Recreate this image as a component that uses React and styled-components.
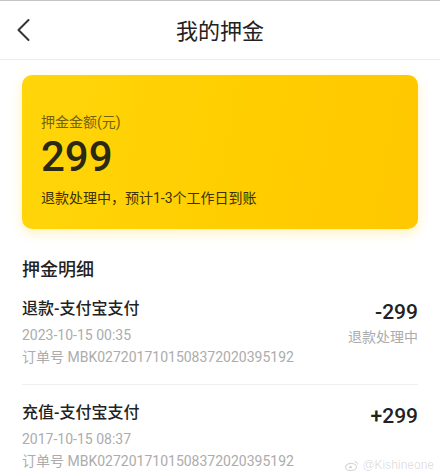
import React from "react";
import styled, { createGlobalStyle } from "styled-components";

const Global = createGlobalStyle`
  html, body { margin: 0; padding: 0; background: #fff; }
  body { font-family: Roboto, "Noto Sans CJK SC", sans-serif; color: #222; }
`;

const Page = styled.div`
  position: relative;
  width: 440px;
  height: 475px;
  overflow: hidden;
  background: #fff;
  border-top: 1px solid #c4c4c4;
  box-sizing: border-box;
`;

const Header = styled.header`
  position: relative;
  height: 59px;
  display: flex;
  align-items: center;
  justify-content: center;
  border-bottom: 1px solid #ececec;
  padding-top: 3px;
  box-sizing: border-box;
`;

const BackButton = styled.button`
  position: absolute;
  left: 12px;
  top: 12px;
  width: 24px;
  height: 34px;
  border: 0;
  padding: 0;
  background: transparent;
  display: flex;
  align-items: center;
  justify-content: center;
`;

const Title = styled.h1`
  margin: 0;
  font-size: 22px;
  font-weight: 400;
  line-height: 30px;
  color: #222;
`;

const Body = styled.main`
  padding: 15px 22px 0;
`;

const Card = styled.section`
  height: 154px;
  box-sizing: border-box;
  border-radius: 10px;
  padding: 37px 19px 0;
  background: linear-gradient(100deg, #ffd60a 0%, #ffcd00 60%, #ffc800 100%);
  box-shadow: 0 4px 12px rgba(255, 200, 0, 0.26);
`;

const CardLabel = styled.div`
  font-size: 14px;
  line-height: 20px;
  color: #74620a;
`;

const CardAmount = styled.div`
  margin-top: 3px;
  font-size: 42px;
  line-height: 44px;
  font-weight: 500;
  color: #2b2814;
`;

const CardNote = styled.div`
  margin-top: 9px;
  font-size: 14px;
  line-height: 20px;
  color: #3b3200;
`;

const SectionTitle = styled.h2`
  margin: 29px 0 0;
  font-size: 18px;
  line-height: 24px;
  font-weight: 500;
  color: #222;
`;

const Record = styled.div`
  display: grid;
  grid-template-columns: 1fr auto;
  padding: ${(p) => (p.$first ? "16px 0 17px" : "17px 0 17px")};
  border-bottom: ${(p) => (p.$last ? "none" : "1px solid #f0f0f0")};
`;

const Left = styled.div`
  display: flex;
  flex-direction: column;
`;

const Right = styled.div`
  display: flex;
  flex-direction: column;
  align-items: flex-end;
`;

const RecordTitle = styled.div`
  font-size: 16px;
  line-height: 22px;
  font-weight: 500;
  color: #222;
`;

const Meta = styled.div`
  margin-top: ${(p) => p.$mt || 0}px;
  font-size: 14px;
  line-height: 20px;
  color: #acacac;
`;

const Amount = styled.div`
  margin-top: 1px;
  font-size: 21px;
  line-height: 26px;
  font-weight: 500;
  color: #222;
`;

const Status = styled.div`
  margin-top: 2px;
  font-size: 14px;
  line-height: 20px;
  color: #acacac;
`;

const Watermark = styled.div`
  position: absolute;
  right: 6px;
  bottom: 3px;
  display: flex;
  align-items: center;
  gap: 3px;
  font-family: "Liberation Sans", sans-serif;
  font-size: 12px;
  color: rgba(0, 0, 0, 0.14);
`;

const records = [
  {
    title: "退款-支付宝支付",
    date: "2023-10-15 00:35",
    order: "订单号 MBK0272017101508372020395192",
    amount: "-299",
    status: "退款处理中",
  },
  {
    title: "充值-支付宝支付",
    date: "2017-10-15 08:37",
    order: "订单号 MBK0272017101508372020395192",
    amount: "+299",
  },
];

export default function App() {
  return (
    <>
      <Global />
      <Page>
        <Header>
          <BackButton aria-label="back">
            <svg width="16" height="24" viewBox="0 0 16 24" fill="none">
              <polyline points="12.5,2 2.5,12 12.5,22" stroke="#333" strokeWidth="2" strokeLinecap="round" strokeLinejoin="round" />
            </svg>
          </BackButton>
          <Title>我的押金</Title>
        </Header>
        <Body>
          <Card>
            <CardLabel>押金金额(元)</CardLabel>
            <CardAmount>299</CardAmount>
            <CardNote>退款处理中，预计1-3个工作日到账</CardNote>
          </Card>
          <SectionTitle>押金明细</SectionTitle>
          {records.map((r, i) => (
            <Record key={i} $first={i === 0} $last={i === records.length - 1}>
              <Left>
                <RecordTitle>{r.title}</RecordTitle>
                <Meta $mt={5}>{r.date}</Meta>
                <Meta $mt={2}>{r.order}</Meta>
              </Left>
              <Right>
                <Amount>{r.amount}</Amount>
                {r.status && <Status>{r.status}</Status>}
              </Right>
            </Record>
          ))}
        </Body>
        <Watermark>
          <svg width="14" height="11" viewBox="0 0 14 11">
            <ellipse cx="6" cy="7" rx="5.5" ry="3.6" fill="none" stroke="rgba(0,0,0,0.16)" strokeWidth="1.2" />
            <circle cx="5.5" cy="7.2" r="1.4" fill="rgba(0,0,0,0.16)" />
            <path d="M9.5 1.5a3 3 0 0 1 3 3" fill="none" stroke="rgba(0,0,0,0.16)" strokeWidth="1.1" />
          </svg>
          <span>@Kishineone</span>
        </Watermark>
      </Page>
    </>
  );
}
